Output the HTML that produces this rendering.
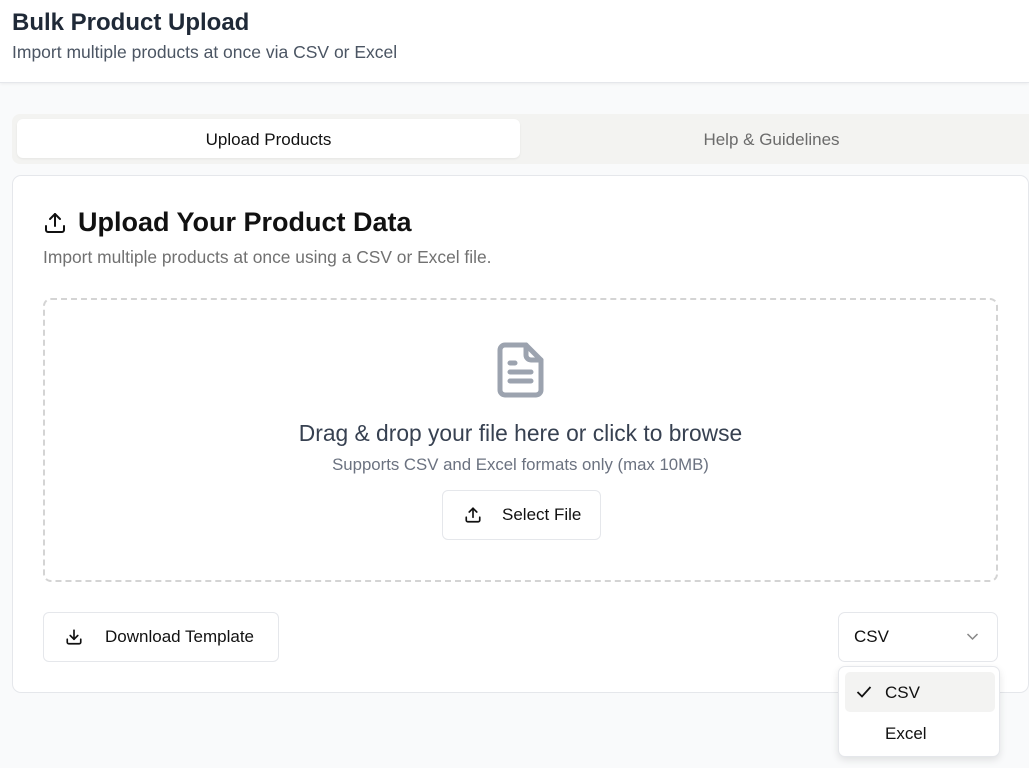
<!DOCTYPE html>
<html><head><style>
*{box-sizing:border-box;margin:0;padding:0}
body{width:1029px;height:768px;overflow:hidden;background:#f9fafb;font-family:"Liberation Sans",sans-serif;color:#111;position:relative}
.hdr{position:absolute;left:0;top:0;width:1029px;height:83px;background:#fff;border-bottom:1px solid #e5e7eb;box-shadow:0 1px 3px rgba(0,0,0,.06)}
.hdr h1{position:absolute;left:12px;top:9px;font-size:24px;font-weight:bold;color:#1f2937}
.hdr p{position:absolute;left:12px;top:42px;font-size:17.5px;color:#4b5563}
.tabs{position:absolute;left:12px;top:114px;width:1030px;height:50px;background:#f3f3f1;border-radius:8px}
.tab{position:absolute;top:5px;height:39px;width:503px;font-size:17px;line-height:41px;text-align:center}
.t1{left:5px;background:#fff;border-radius:6px;box-shadow:0 1px 2px rgba(0,0,0,.06);color:#111}
.t2{left:508px;color:#6b6b6b}
.card{position:absolute;left:12px;top:175px;width:1017px;height:518px;background:#fff;border:1px solid #e5e7eb;border-radius:9px}
.title{position:absolute;left:30px;top:31px;font-size:27px;font-weight:bold;display:flex;align-items:center;gap:11px}
.sub{position:absolute;left:30px;top:71px;font-size:17.4px;color:#717171}
.drop{position:absolute;left:30px;top:122px;width:955px;height:284px;border:2px dashed #d4d4d4;border-radius:8px}
.dt{position:absolute;top:120px;width:100%;text-align:center;font-size:22.8px;color:#374151}
.ds{position:absolute;top:155px;width:100%;text-align:center;font-size:16.8px;color:#6b7280}
.btn{position:absolute;background:#fff;border:1px solid #e5e7eb;border-radius:6px;display:flex;align-items:center;font-size:17px;color:#111}
.sel{position:absolute;left:825px;top:436px;width:160px;height:50px;border:1px solid #e5e7eb;border-radius:7px;font-size:17px;padding-left:15px;line-height:48px}
.menu{position:absolute;left:838px;top:666px;width:162px;height:91px;background:#fff;border:1px solid #e5e7eb;border-radius:7px;box-shadow:0 3px 8px rgba(0,0,0,.1)}
.it{position:absolute;left:6px;width:150px;height:40px;line-height:42px;padding-left:40px;font-size:17px;border-radius:5px}
</style></head><body>
<div class="hdr"><h1>Bulk Product Upload</h1><p>Import multiple products at once via CSV or Excel</p></div>
<div class="tabs"><div class="tab t1">Upload Products</div><div class="tab t2">Help &amp; Guidelines</div></div>
<div class="card">
<div class="title"><svg width="24" height="24" viewBox="0 0 24 24" fill="none" stroke="#111" stroke-width="2" stroke-linecap="round" stroke-linejoin="round"><path d="M21 15v4a2 2 0 0 1-2 2H5a2 2 0 0 1-2-2v-4"/><path d="M17 8l-5-5-5 5"/><path d="M12 3v12"/></svg>Upload Your Product Data</div>
<div class="sub">Import multiple products at once using a CSV or Excel file.</div>
<div class="drop">
<svg style="position:absolute;left:448px;top:40px" width="56" height="60" viewBox="0 0 56 60" fill="none" stroke="#9ca3af" stroke-width="5" stroke-linecap="round" stroke-linejoin="round"><path d="M33 5H12a5 5 0 0 0-5 5v40a5 5 0 0 0 5 5h31a5 5 0 0 0 5-5V20z"/><path d="M33 5v10a5 5 0 0 0 5 5h10"/><path d="M17 23h5M17 32h21M17 41h21"/></svg>
<div class="dt">Drag &amp; drop your file here or click to browse</div>
<div class="ds">Supports CSV and Excel formats only (max 10MB)</div>
<div class="btn" style="left:397px;top:190px;width:159px;height:50px;padding-left:21px;gap:20px"><svg width="18" height="18" viewBox="0 0 24 24" fill="none" stroke="#111" stroke-width="2.2" stroke-linecap="round" stroke-linejoin="round"><path d="M21 15v4a2 2 0 0 1-2 2H5a2 2 0 0 1-2-2v-4"/><path d="M17 8l-5-5-5 5"/><path d="M12 3v12"/></svg>Select File</div>
</div>
<div class="btn" style="left:30px;top:436px;width:236px;height:50px;padding-left:21px;gap:22px"><svg width="18" height="18" viewBox="0 0 24 24" fill="none" stroke="#111" stroke-width="2.2" stroke-linecap="round" stroke-linejoin="round"><path d="M21 15v4a2 2 0 0 1-2 2H5a2 2 0 0 1-2-2v-4"/><path d="M7 10l5 5 5-5"/><path d="M12 15V3"/></svg>Download Template</div>
<div class="sel">CSV<svg style="position:absolute;right:18px;top:19px" width="13" height="9" viewBox="0 0 13 9" fill="none" stroke="#888" stroke-width="1.5"><path d="M1.5 2l5 5 5-5"/></svg></div>
</div>
<div class="menu">
<div class="it" style="top:5px;background:#f3f3f2"><svg style="position:absolute;left:11px;top:13px" width="16" height="13" viewBox="0 0 16 13" fill="none" stroke="#111" stroke-width="1.8"><path d="M1.5 7l4.5 4.5L14.5 2"/></svg>CSV</div>
<div class="it" style="top:46px">Excel</div>
</div>
</body></html>
